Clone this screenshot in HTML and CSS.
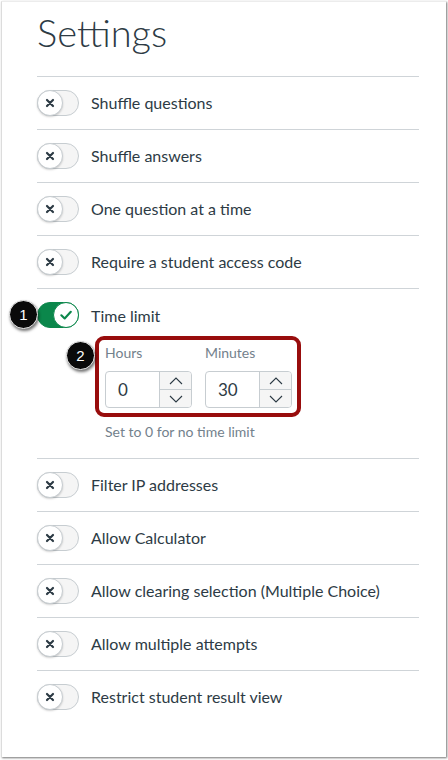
FILE: index.html
```html
<!DOCTYPE html>
<html lang="en">
<head>
<meta charset="utf-8">
<title>Settings</title>
<link rel="stylesheet" href="styles.css">
</head>
<body>
<div class="page">
  <h1 class="title">Settings</h1>
  <ul class="list">
    <li class="row"><span class="toggle"><span class="knob"><svg viewBox="0 0 10 10" class="x"><path d="M2 2 L8 8 M8 2 L2 8"/></svg></span></span><span class="label">Shuffle questions</span></li>
    <li class="row"><span class="toggle"><span class="knob"><svg viewBox="0 0 10 10" class="x"><path d="M2 2 L8 8 M8 2 L2 8"/></svg></span></span><span class="label">Shuffle answers</span></li>
    <li class="row"><span class="toggle"><span class="knob"><svg viewBox="0 0 10 10" class="x"><path d="M2 2 L8 8 M8 2 L2 8"/></svg></span></span><span class="label">One question at a time</span></li>
    <li class="row"><span class="toggle"><span class="knob"><svg viewBox="0 0 10 10" class="x"><path d="M2 2 L8 8 M8 2 L2 8"/></svg></span></span><span class="label">Require a student access code</span></li>
    <li class="row time">
      <div class="time-head">
        <span class="badge badge-1">1</span>
        <span class="toggle on"><span class="knob"><svg viewBox="0 0 12 12" class="check"><path d="M2.5 6.2 L5 8.6 L9.6 3.6"/></svg></span></span><span class="label">Time limit</span>
      </div>
      <div class="limit-box">
        <span class="badge badge-2">2</span>
        <div class="field">
          <span class="field-label">Hours</span>
          <div class="num">
            <span class="num-value">0</span>
            <span class="spin">
              <span class="spin-btn"><svg viewBox="0 0 14 8"><path d="M1 7 L7 1 L13 7"/></svg></span>
              <span class="spin-btn"><svg viewBox="0 0 14 8"><path d="M1 1 L7 7 L13 1"/></svg></span>
            </span>
          </div>
        </div>
        <div class="field">
          <span class="field-label">Minutes</span>
          <div class="num">
            <span class="num-value">30</span>
            <span class="spin">
              <span class="spin-btn"><svg viewBox="0 0 14 8"><path d="M1 7 L7 1 L13 7"/></svg></span>
              <span class="spin-btn"><svg viewBox="0 0 14 8"><path d="M1 1 L7 7 L13 1"/></svg></span>
            </span>
          </div>
        </div>
      </div>
      <p class="hint">Set to 0 for no time limit</p>
    </li>
    <li class="row"><span class="toggle"><span class="knob"><svg viewBox="0 0 10 10" class="x"><path d="M2 2 L8 8 M8 2 L2 8"/></svg></span></span><span class="label">Filter IP addresses</span></li>
    <li class="row"><span class="toggle"><span class="knob"><svg viewBox="0 0 10 10" class="x"><path d="M2 2 L8 8 M8 2 L2 8"/></svg></span></span><span class="label">Allow Calculator</span></li>
    <li class="row"><span class="toggle"><span class="knob"><svg viewBox="0 0 10 10" class="x"><path d="M2 2 L8 8 M8 2 L2 8"/></svg></span></span><span class="label">Allow clearing selection (Multiple Choice)</span></li>
    <li class="row"><span class="toggle"><span class="knob"><svg viewBox="0 0 10 10" class="x"><path d="M2 2 L8 8 M8 2 L2 8"/></svg></span></span><span class="label">Allow multiple attempts</span></li>
    <li class="row"><span class="toggle"><span class="knob"><svg viewBox="0 0 10 10" class="x"><path d="M2 2 L8 8 M8 2 L2 8"/></svg></span></span><span class="label">Restrict student result view</span></li>
  </ul>
</div>
</body>
</html>
```
FILE: styles.css
```css
* { box-sizing: border-box; }
html, body { margin: 0; padding: 0; background: #ffffff; }
body {
  font-family: Lato, "Open Sans", Arial, sans-serif;
  color: #2d3b45;
  width: 448px;
  height: 760px;
  overflow: hidden;
}
.page {
  margin: 1px 2px 0 1px;
  height: 756px;
  border-left: 1px solid #dcdcdc;
  border-top: 1px solid #ececec;
  box-shadow: 1px 1px 2px rgba(0,0,0,0.55);
  padding: 0 27px 0 35px;
  background: #fff;
}
.title {
  margin: 0;
  height: 74px;
  padding-top: 7px;
  font-size: 38px;
  line-height: 46px;
  font-weight: 300;
  letter-spacing: 0;
}
.list { list-style: none; margin: 0; padding: 0; }
.row {
  border-top: 1px solid #cfd4d8;
  height: 53px;
  display: flex;
  align-items: center;
  gap: 12px;
  font-size: 16px;
  padding-bottom: 1px;
}
.toggle {
  position: relative;
  width: 42px;
  height: 26px;
  border-radius: 13px;
  background: #f5f5f5;
  border: 1px solid #c7cdd1;
  flex: none;
}
.knob {
  position: absolute;
  left: -1px;
  top: -1px;
  width: 26px;
  height: 26px;
  border-radius: 50%;
  background: #fff;
  border: 1px solid #c7cdd1;
  box-shadow: 0 1px 2px rgba(0,0,0,0.18);
  display: flex;
  align-items: center;
  justify-content: center;
}
.x { width: 10px; height: 10px; }
.x path { stroke: #2d3b45; stroke-width: 2.2; fill: none; stroke-linecap: round; }
.toggle.on { background: #0b874b; border-color: #0b874b; }
.toggle.on .knob { left: auto; right: -1px; border-color: #0b874b; box-shadow: none; }
.check { width: 16px; height: 16px; }
.check path { stroke: #0b874b; stroke-width: 1.6; fill: none; stroke-linecap: round; stroke-linejoin: round; }

.row.time {
  height: auto;
  display: block;
  padding-top: 13px;
  padding-bottom: 17px;
}
.time-head {
  position: relative;
  display: flex;
  align-items: center;
  gap: 12px;
  height: 26px;
}
.badge {
  position: absolute;
  width: 29px;
  height: 29px;
  border-radius: 50%;
  background: #0a0a0a;
  color: #fff;
  font-family: Arial, "Liberation Sans", sans-serif;
  font-size: 15px;
  line-height: 27px;
  text-align: center;
  box-shadow: 1px 2px 3px rgba(0,0,0,0.55);
  border: 1px solid #f0f0f0;
  z-index: 2;
}
.badge-1 { left: -28px; top: -2px; }
.badge-2 { left: -33px; top: 1px; }
.limit-box {
  position: relative;
  margin: 8px 0 0 58px;
  width: 206px;
  border: 4px solid #980d0d;
  border-radius: 9px;
  display: flex;
  gap: 13px;
  padding: 4px 5px 5px 6px;
}
.field { display: flex; flex-direction: column; }
.field-label {
  font-size: 14px;
  color: #73818c;
  line-height: 18px;
  height: 27px;
}
.num {
  width: 87px;
  height: 37px;
  border: 1px solid #c7cdd1;
  border-radius: 4px;
  display: flex;
  overflow: hidden;
}
.num-value {
  flex: 1;
  font-size: 17px;
  line-height: 35px;
  padding-left: 12px;
}
.spin {
  width: 32px;
  border-left: 1px solid #c7cdd1;
  background: #f5f5f5;
  display: flex;
  flex-direction: column;
}
.spin-btn {
  flex: 1;
  display: flex;
  align-items: center;
  justify-content: center;
}
.spin-btn + .spin-btn { border-top: 1px solid #c7cdd1; }
.spin-btn svg { width: 14px; height: 8px; }
.spin-btn path { stroke: #2d3b45; stroke-width: 1.1; fill: none; }
.hint {
  margin: 6px 0 0 68px;
  font-size: 14px;
  color: #73818c;
  line-height: 18px;
}
```
